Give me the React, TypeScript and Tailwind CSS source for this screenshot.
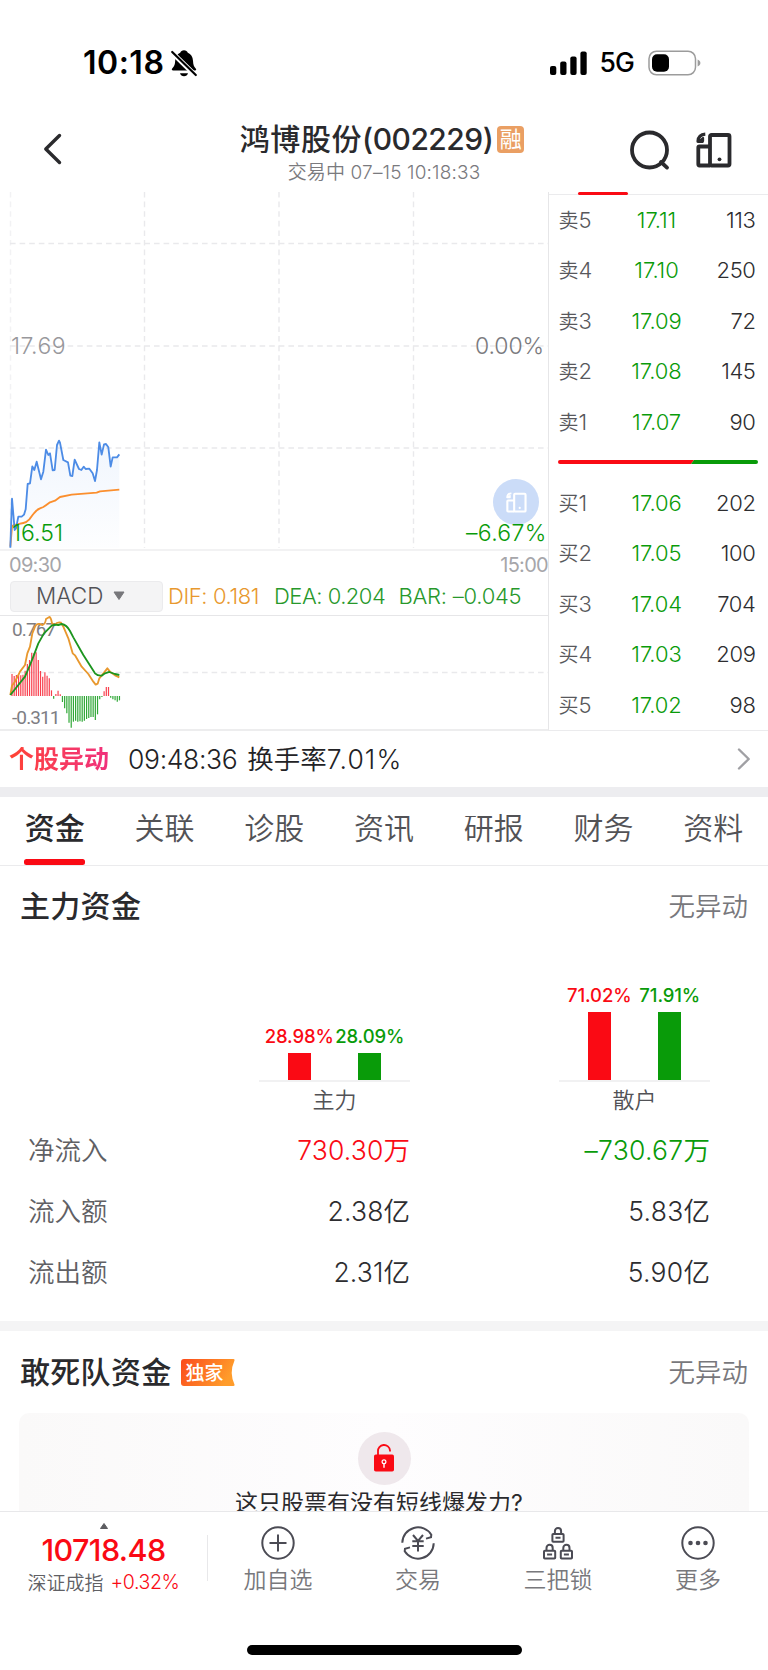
import React from 'react';

type Quote = { label: string; price: string; volume: string };

const sells: Quote[] = [
  { label: '卖5', price: '17.11', volume: '113' },
  { label: '卖4', price: '17.10', volume: '250' },
  { label: '卖3', price: '17.09', volume: '72' },
  { label: '卖2', price: '17.08', volume: '145' },
  { label: '卖1', price: '17.07', volume: '90' },
];

const buys: Quote[] = [
  { label: '买1', price: '17.06', volume: '202' },
  { label: '买2', price: '17.05', volume: '100' },
  { label: '买3', price: '17.04', volume: '704' },
  { label: '买4', price: '17.03', volume: '209' },
  { label: '买5', price: '17.02', volume: '98' },
];

const tabs = ['资金', '关联', '诊股', '资讯', '研报', '财务', '资料'];

const flows = [
  { label: '净流入', main: '730.30', retail: '–730.67', unit: '万', mainColor: 'text-[#fa0a14]', retailColor: 'text-[#099b09]' },
  { label: '流入额', main: '2.38', retail: '5.83', unit: '亿', mainColor: 'text-[#2d2d30]', retailColor: 'text-[#2d2d30]' },
  { label: '流出额', main: '2.31', retail: '5.90', unit: '亿', mainColor: 'text-[#2d2d30]', retailColor: 'text-[#2d2d30]' },
];

// Histogram tips in thirds of a pixel, measured against the zero line at 828.
const macdBars = [
  762, 768, 765, 762, 766, 764, 752, 732, 720, 698, 700, 697, 720, 753, 770, 757, 767, 775, 811, 836, 822, 812, 823,
  846, 865, 880, 908, 923, 905, 902, 905, 904, 905, 902, 897, 894, 891, 891, 900, 883, 838, 831, 814, 801, 801, 833,
  838, 841, 845, 841,
];

const pricePoints =
  '31,383 36,236 44,330 48,325 55,290 65,290 72,284 77,268 83,192 90,190 97,139 103,150 110,125 123,178 130,155 138,89 145,105 150,100 158,151 164,150 171,75 177,62 180,68 190,120 204,127 211,167 217,168 224,119 237,147 244,150 251,140 257,147 268,146 278,160 285,183 291,150 298,67 305,104 312,73 318,72 325,82 332,140 338,112 351,112 358,103';

function QuoteRow({ q }: { q: Quote }) {
  return (
    <div className="grid h-[50.4px] grid-cols-[66px_64px_67px] items-center pb-[0.400px] pl-[9.500px] text-[22px] leading-none">
      <span className="tracking-[-0.5px] text-[#58585c]">
        <span className="text-[20px] tracking-normal">{q.label[0]}</span>
        {q.label[1]}
      </span>
      <span className="text-center tracking-[-0.100px] text-[#099b09]">{q.price}</span>
      <span className="text-right tracking-[-0.400px] text-[#2d2d30]">{q.volume}</span>
    </div>
  );
}

function LandscapeIcon({ className, stroke }: { className: string; stroke: number }) {
  return (
    <svg viewBox="0 0 36 36" className={className} fill="none" stroke="currentColor" strokeWidth={stroke} strokeLinejoin="round">
      <rect x="14" y="3" width="19.5" height="30.5" rx="1.5" />
      <path d="M14 14.500H3.500a1.200 1.200 0 0 0-1.200 1.200V32.300A1.200 1.200 0 0 0 3.500 33.500H14" />
      <path d="M9.300 2.200C5 2.500 2.300 5 2 9.300h5.400" strokeWidth={stroke * 0.85} />
      <path d="M7 6v3H3.500z" strokeWidth={stroke * 0.6} />
      <circle cx="23.500" cy="27.300" r="1.900" fill="currentColor" stroke="none" />
    </svg>
  );
}

function Bar({ value, color, text, height }: { value: string; color: string; text: string; height: string }) {
  return (
    <div className="flex w-[70.5px] flex-col items-center">
      <span className={`flex h-5 items-center whitespace-nowrap text-[18.5px] font-[480] leading-none tracking-[-0.100px] ${text}`}>
        {value}
      </span>
      <div className={`mt-[6.500px] w-[23px] ${color} ${height}`} />
    </div>
  );
}

function NavItem({ label, children }: { label: string; children: React.ReactNode }) {
  return (
    <div className="flex w-[140px] flex-col items-center">
      <svg viewBox="0 0 36 36" className="mt-[13px] h-9 w-9 text-[#4b4b54]" fill="none" stroke="currentColor" strokeWidth="2">
        {children}
      </svg>
      <span className="mt-2 flex h-[23px] items-center text-[23px] leading-none text-[#78787c]">{label}</span>
    </div>
  );
}

function Padlock({ x, y }: { x: number; y: number }) {
  return (
    <g transform={`translate(${x} ${y})`}>
      <rect x="-5.600" y="0" width="11.200" height="7.800" rx="0.800" />
      <path d="M-3.100 0v-2.800a3.100 3.100 0 0 1 6.200 0v2.800M-2.500 3.800h5" />
    </g>
  );
}

export default function App() {
  return (
    <div className="flex h-[1670px] w-[768px] flex-col overflow-hidden bg-white font-['Inter','Noto_Sans_CJK_SC',sans-serif] font-[350] text-[#2a2a2d]">
      {/* Status bar */}
      <div className="flex h-[125px] shrink-0 items-center justify-between pl-[83px] pr-[66px] text-black">
        <div className="flex items-center">
          <span className="text-[32px] font-semibold leading-none tracking-[0.500px]">10:18</span>
          <svg viewBox="0 0 28 30" className="ml-[6px] h-[30px] w-[28px]">
            <path
              d="M14 2.200c1.900 0 3.300 1 3.800 2.500 3.200 1.300 5 4 5.200 8 .2 4 .9 5.800 2.700 7.900.9 1 .5 2-.7 2H3.200c-1.300 0-1.800-1-1-2 2.300-2.500 2.900-4.200 3-8C5.400 8.600 7 6 10.200 4.700 10.700 3.200 12.100 2.200 14 2.200z"
              fill="#000"
            />
            <path d="M10 25.200h8c-.5 1.800-2 3-4 3s-3.500-1.200-4-3z" fill="#000" />
            <path d="M1 3.500 26 28" stroke="#fff" strokeWidth="5" />
            <path d="M2.200 4 25.800 27" stroke="#000" strokeWidth="2.200" strokeLinecap="round" />
          </svg>
        </div>
        <div className="flex items-center">
          <svg viewBox="0 0 38 24" className="h-6 w-[38px]">
            <rect x="0" y="15" width="6.300" height="9" rx="2" />
            <rect x="10.200" y="10.500" width="6.300" height="13.500" rx="2" />
            <rect x="20.300" y="5.500" width="6.300" height="18.500" rx="2" />
            <rect x="30.400" y="0.500" width="6.300" height="23.500" rx="2" />
          </svg>
          <span className="ml-[11px] mr-[14px] text-[26.500px] font-medium leading-none tracking-[-0.8px]">5G</span>
          <svg viewBox="0 0 54 26" className="h-[26px] w-[54px]">
            <rect x="1" y="1.200" width="46.500" height="23.600" rx="7.500" fill="none" stroke="#9c9c9c" strokeWidth="1.500" />
            <rect x="4" y="4.200" width="17" height="17.600" rx="5" />
            <path d="M49.600 9.500c1.900.7 2.800 2 2.800 3.500s-.9 2.800-2.800 3.500z" fill="#9c9c9c" />
          </svg>
        </div>
      </div>

      {/* Title bar */}
      <header className="grid h-[67px] shrink-0 grid-cols-[200px_1fr_200px]">
        <svg viewBox="0 0 24 36" className="ml-[41px] mt-[6px] h-9 w-6">
          <path d="M18.500 4.500 4.800 18l13.700 13.500" fill="none" stroke="#2a2a2d" strokeWidth="3.400" strokeLinecap="round" strokeLinejoin="round" />
        </svg>
        <div className="flex flex-col items-center">
          <div className="-ml-1 flex h-7 items-center whitespace-nowrap text-[30px] font-[480] leading-none">
            <span className="tracking-[0.600px]">鸿博股份</span>
            <span className="tracking-[-0.500px]">(002229)</span>
            <span className="ml-[4px] flex h-[27px] w-[27px] items-center justify-center rounded-[4px] bg-[#ea9f63] text-[22px] font-normal text-white">
              融
            </span>
          </div>
          <div className="flex h-[38px] items-center whitespace-nowrap text-[19px] leading-none tracking-[0.150px] text-[#7a7a7e]">
            交易中 07–15 10:18:33
          </div>
        </div>
        <div className="flex">
          <svg viewBox="0 0 44 44" className="ml-[59px] mt-[2.500px] h-11 w-11" fill="none" stroke="#2a2a2d" strokeWidth="3.800">
            <circle cx="22.500" cy="22" r="17.500" />
            <path d="m34 34 6 5.600" strokeLinecap="round" />
          </svg>
          <LandscapeIcon className="ml-[25px] mt-[7px] h-9 w-9 text-[#2a2a2d]" stroke={3.8} />
        </div>
      </header>

      {/* Charts and order book */}
      <section className="flex h-[539px] shrink-0">
        <div className="flex w-[549px] flex-col border-b-2 border-r border-b-[#ededee] border-r-[#e6e6e8]">
          <div className="relative h-[357px]">
            <svg viewBox="0 0 548 357" className="h-[357px] w-[548px]">
              <defs>
                <linearGradient id="area" x1="0" y1="0" x2="0" y2="1">
                  <stop offset="0" stopColor="#4b8bea" stopOpacity="0.080" />
                  <stop offset="1" stopColor="#4b8bea" stopOpacity="0.010" />
                </linearGradient>
              </defs>
              <g stroke="#e9e9ec" strokeWidth="1.400" strokeDasharray="5.600 4" fill="none">
                <path d="M10.500 0V356" strokeOpacity="0.600" />
                <path d="M144.500 0V356M279 0V356M413.500 0V356" />
                <path d="M10 51.500H548M10 154H548M10 256H548" />
              </g>
              <g transform="translate(0 228) scale(.33333)" fill="none" strokeLinejoin="round">
                <polygon points={`${pricePoints} 358,384 31,384`} fill="url(#area)" />
                <path
                  d="M31 380 36 320Q38 314 50 313L70 309Q80 307 88 298L100 282Q108 270 120 265L130 261Q140 255 150 247L165 242 180 231Q195 228 215 224L290 218 300 214 358 209"
                  stroke="#fb8f2e"
                  strokeWidth="5.500"
                />
                <polyline points={pricePoints} stroke="#4d8ce6" strokeWidth="5.500" />
              </g>
            </svg>
            <span className="absolute left-[11px] top-[143px] text-[23px] leading-[23px] tracking-[0.500px] text-[#98989c]">17.69</span>
            <span className="absolute right-[4px] top-[143px] text-[23px] leading-[23px] tracking-[-0.100px] text-[#7a7a7e]">0.00%</span>
            <div className="absolute left-[493px] top-[287px] flex h-[46px] w-[46px] items-center justify-center rounded-full bg-[#cbdcf8]">
              <LandscapeIcon className="h-[21px] w-[21px] text-white" stroke={3.6} />
            </div>
            <span className="absolute left-[12px] top-[330px] text-[23px] leading-[23px] text-[#099b09]">16.51</span>
            <span className="absolute right-[1.500px] top-[330px] text-[23px] leading-[23px] tracking-[0.300px] text-[#099b09]">–6.67%</span>
          </div>
          <div className="flex h-[29px] items-center justify-between border-t-2 border-[#f2f2f3] pl-[9px] text-[20px] font-normal leading-none tracking-[-0.700px] text-[#a6a6aa]">
            <span>09:30</span>
            <span>15:00</span>
          </div>
          <div className="flex h-[38px] items-center border-b border-[#e6e6e8] pl-[10px] text-[22px] leading-none">
            <div className="flex h-[31px] w-[153px] items-center rounded-[4px] border border-[#ebebed] bg-[#f4f4f5] pb-px pl-[25px] text-[#525256]">
              <span className="text-[22.500px]">MACD</span>
              <svg viewBox="0 0 12 10" className="ml-[10px] h-[10px] w-3">
                <path d="M1 1h10L6 8.500z" fill="#77777b" stroke="#77777b" strokeLinejoin="round" />
              </svg>
            </div>
            <span className="ml-[5px] w-[106px] whitespace-nowrap pb-px tracking-[-0.400px] text-[#e8982e]">DIF: 0.181</span>
            <span className="w-[124.500px] whitespace-nowrap pb-px tracking-[-0.500px] text-[#27982b]">DEA: 0.204</span>
            <span className="whitespace-nowrap pb-px tracking-[-0.250px] text-[#27982b]">BAR: –0.045</span>
          </div>
          <div className="relative h-[113px] font-['Roboto',sans-serif] text-[19px] font-[450] leading-none text-[#7e7e83]">
            <span className="absolute left-[12px] top-[4px] tracking-[-0.900px]">0.767</span>
            <span className="absolute left-[12px] top-[92px] tracking-[-0.900px]">-0.311</span>
            <svg viewBox="0 0 548 113" className="absolute left-0 top-0 h-[113px] w-[548px]" fill="none">
              <path d="M10 56.500H548" stroke="#e9e9ec" strokeWidth="1.300" strokeDasharray="5.600 4" />
              <g transform="translate(0 -196) scale(.33333)" strokeLinejoin="round">
                {macdBars.map((tip, i) => (
                  <path
                    key={i}
                    d={`M${36 + i * 6.58} 828V${tip}`}
                    stroke={tip < 828 ? '#f8404e' : '#30a837'}
                    strokeWidth="3.600"
                  />
                ))}
                <path
                  d="M31 825 36 797Q43 790 50 775L60 755 75 735 82 700 90 680 97 640 105 620Q110 610 118 612L128 615Q136 612 138 597L148 591Q153 592 156 610L163 615Q173 604 183 608L190 620 205 655 218 700 225 706 245 740 265 762 280 785 287 794 293 791 298 775 312 758 322 745 330 755 345 766 358 772"
                  stroke="#e8982e"
                  strokeWidth="5.500"
                />
                <path
                  d="M31 825 55 795 75 770 90 735 100 710 115 670 132 640 155 617Q165 613 175 615L185 612Q200 614 210 633L220 652 250 705 285 760Q293 768 305 767L315 760 328 756 345 762 358 765"
                  stroke="#1c951f"
                  strokeWidth="5.500"
                />
              </g>
            </svg>
          </div>
        </div>

        <div className="flex w-[219px] flex-col border-b border-[#ebebed]">
          <div className="h-[3px] shrink-0 border-b border-[#ebebed] pl-[29px]">
            <div className="relative -top-[0.500px] h-[3.500px] w-[50px] rounded-full bg-[#fa0a14]" />
          </div>
          {sells.map((q) => (
            <QuoteRow key={q.label} q={q} />
          ))}
          <div className="flex h-[31px] items-center pl-[9px]">
            <svg viewBox="0 0 200 4" className="h-1 w-[200px]">
              <path d="M2 0H136l-3 4H2a2 2 0 0 1 0-4z" fill="#fa0a14" />
              <path d="M136 0H198a2 2 0 0 1 0 4H133z" fill="#099b09" />
            </svg>
          </div>
          {buys.map((q) => (
            <QuoteRow key={q.label} q={q} />
          ))}
        </div>
      </section>

      {/* Stock movement alert */}
      <div className="flex h-14 shrink-0 items-center pl-[9px] pr-[17px] text-[26.500px] leading-none text-[#222225]">
        <span className="bg-gradient-to-r from-[#ff4230] to-[#f0307c] bg-clip-text text-[25px] font-bold text-transparent">个股异动</span>
        <span className="ml-[19px] tracking-[-0.350px]">09:48:36</span>
        <span className="ml-[10px]">
          换手率<span className="tracking-[1.100px]">7.01%</span>
        </span>
        <svg viewBox="0 0 14 24" className="ml-auto h-6 w-[14px]" fill="none" stroke="#a0a0a4" strokeWidth="2.400">
          <path d="m2 2.500 9.700 9.500L2 21.500" strokeLinecap="round" strokeLinejoin="round" />
        </svg>
      </div>

      <div className="h-[10px] shrink-0 bg-[#ededf0]" />

      {/* Tabs */}
      <nav className="grid h-[69px] shrink-0 grid-cols-7 border-b border-[#ebebed] text-[30px] leading-none text-[#525256]">
        {tabs.map((tab, i) => (
          <div key={tab} className="flex flex-col items-center">
            <span className={i === 0 ? 'flex h-[62px] items-center font-medium text-[#2a2a2d]' : 'flex h-[62px] items-center'}>
              {tab}
            </span>
            {i === 0 && <span className="h-[6px] w-[61px] rounded-[2.500px] bg-[#fa0a14]" />}
          </div>
        ))}
      </nav>

      {/* Main capital */}
      <section className="h-[455px] shrink-0">
        <div className="flex h-[82px] items-center justify-between pb-[2px] pl-5 pr-[20px] leading-none">
          <h2 className="text-[30px] font-medium tracking-[0.300px]">主力资金</h2>
          <span className="text-[26.500px] text-[#78787c]">无异动</span>
        </div>
        <div className="flex h-[172px] items-end gap-[149px] pl-[259px]">
          <div className="w-[151px]">
            <div className="flex items-end border-b-2 border-[#f1f1f2] pl-[5px]">
              <Bar value="28.98%" color="bg-[#fa0a14]" text="text-[#fa0a14]" height="h-[27.500px]" />
              <Bar value="28.09%" color="bg-[#099b09]" text="text-[#099b09]" height="h-[27px]" />
            </div>
            <div className="flex h-[38px] items-center justify-center pb-[2px] text-[22px] leading-none text-[#525256]">主力</div>
          </div>
          <div className="w-[151px]">
            <div className="flex items-end border-b-2 border-[#f1f1f2] pl-[5px]">
              <Bar value="71.02%" color="bg-[#fa0a14]" text="text-[#fa0a14]" height="h-[68px]" />
              <Bar value="71.91%" color="bg-[#099b09]" text="text-[#099b09]" height="h-[68.500px]" />
            </div>
            <div className="flex h-[38px] items-center justify-center pb-[2px] text-[22px] leading-none text-[#525256]">散户</div>
          </div>
        </div>
        {flows.map((f) => (
          <div key={f.label} className="grid h-[61px] grid-cols-[180px_202px_300px] items-center pl-[28px] text-[26.500px] leading-none">
            <span className="text-[#606064]">{f.label}</span>
            <span className={`text-right ${f.mainColor}`}>
              <span className="tracking-[0.150px]">{f.main}</span>
              {f.unit}
            </span>
            <span className={`text-right ${f.retailColor}`}>
              <span className="tracking-[0.300px]">{f.retail}</span>
              {f.unit}
            </span>
          </div>
        ))}
      </section>

      <div className="h-[10px] shrink-0 bg-[#f4f4f5]" />

      {/* Short-term capital */}
      <section className="h-[180px] shrink-0 overflow-hidden">
        <div className="flex h-[82px] items-center pl-5 pr-[20px] leading-none">
          <h2 className="text-[30px] font-medium tracking-[0.300px]">敢死队资金</h2>
          <div className="relative ml-[9px] h-[27px] w-[54px]">
            <svg viewBox="0 0 54 27" className="h-[27px] w-[54px]">
              <defs>
                <linearGradient id="tag" x1="0" y1="0" x2="1" y2="0.300">
                  <stop offset="0" stopColor="#fb4a1b" />
                  <stop offset="1" stopColor="#ff9c2b" />
                </linearGradient>
              </defs>
              <path d="M3 0H52.500Q54 .3 53.500 1.500 48 13.500 53.500 25.500 54 26.700 52.500 27H3a3 3 0 0 1-3-3V3a3 3 0 0 1 3-3z" fill="url(#tag)" />
            </svg>
            <span className="absolute left-[5px] top-[5px] whitespace-nowrap text-[19px] font-medium leading-[19px] text-white">独家</span>
          </div>
          <span className="ml-auto text-[26.500px] text-[#78787c]">无异动</span>
        </div>
        <div className="mx-[19px] flex h-[150px] flex-col items-center rounded-[10px] bg-gradient-to-r from-[#faf9f9] via-[#fefdfe] to-[#faf9f9]">
          <div className="mt-[18.500px] flex h-[53px] w-[53px] items-center justify-center rounded-full bg-[#efe8ec]">
            <svg viewBox="0 0 22 28" className="h-7 w-[22px]">
              <path d="M5 12V7.500a6 6 0 0 1 12-1V7.500" fill="none" stroke="#fa0a14" strokeWidth="1.800" />
              <rect x="1" y="10.500" width="20" height="17" rx="1.800" fill="#fa0a14" />
              <circle cx="11" cy="17.800" r="1.900" fill="none" stroke="#fff" strokeWidth="1.200" />
              <path d="M11 19.600v4.200" stroke="#fff" strokeWidth="1.400" />
            </svg>
          </div>
          <p className="mr-[10px] mt-[7.500px] text-[23px] font-normal leading-[23px] text-[#2a2a2d]">这只股票有没有短线爆发力?</p>
        </div>
      </section>

      {/* Bottom bar */}
      <footer className="flex h-[159px] shrink-0 flex-col border-t border-[#e8e8ea] bg-white">
        <div className="flex h-[120px]">
          <div className="flex w-[207px] flex-col items-center">
            <svg viewBox="0 0 10 8" className="mt-[10px] h-2 w-[10px]">
              <path d="M5 1.500 8.500 6.500h-7z" fill="#5c5c60" stroke="#5c5c60" strokeLinejoin="round" />
            </svg>
            <span className="mt-[4px] flex h-[32px] items-center text-[30.500px] font-medium leading-none tracking-[-0.600px] text-[#fa0a14]">
              10718.48
            </span>
            <span className="mt-[5px] flex h-[24px] items-center text-[19px] leading-none text-[#606064]">
              深证成指
              <span className="ml-[7px] text-[19.500px] tracking-[-0.400px] text-[#fa0a14]">+0.32%</span>
            </span>
          </div>
          <div className="mt-[23px] h-[46px] w-px bg-[#e8e8ea]" />
          <NavItem label="加自选">
            <circle cx="18" cy="18" r="15.700" />
            <path d="M18 9.500v17M9.500 18h17" />
          </NavItem>
          <NavItem label="交易">
            <path d="M2.300 17.800A15.700 15.700 0 0 1 31.300 9.700L31 12.300 26 13.600M33.700 18.200A15.700 15.700 0 0 1 4.700 26.300L5 23.700 10 22.400" />
            <path d="m13 10 5 6 5-6M18 16v10.500M12.300 16.300h11.400M12.300 21h11.400" />
          </NavItem>
          <NavItem label="三把锁">
            <Padlock x={18} y={9} />
            <Padlock x={9.6} y={25.7} />
            <Padlock x={26.4} y={25.7} />
          </NavItem>
          <NavItem label="更多">
            <circle cx="18" cy="18" r="15.700" />
            <g fill="currentColor" stroke="none">
              <circle cx="10.500" cy="18" r="2.300" />
              <circle cx="18" cy="18" r="2.300" />
              <circle cx="25.500" cy="18" r="2.300" />
            </g>
          </NavItem>
        </div>
        <div className="mx-auto mt-[12.500px] h-[10px] w-[275px] rounded-full bg-black" />
      </footer>
    </div>
  );
}
